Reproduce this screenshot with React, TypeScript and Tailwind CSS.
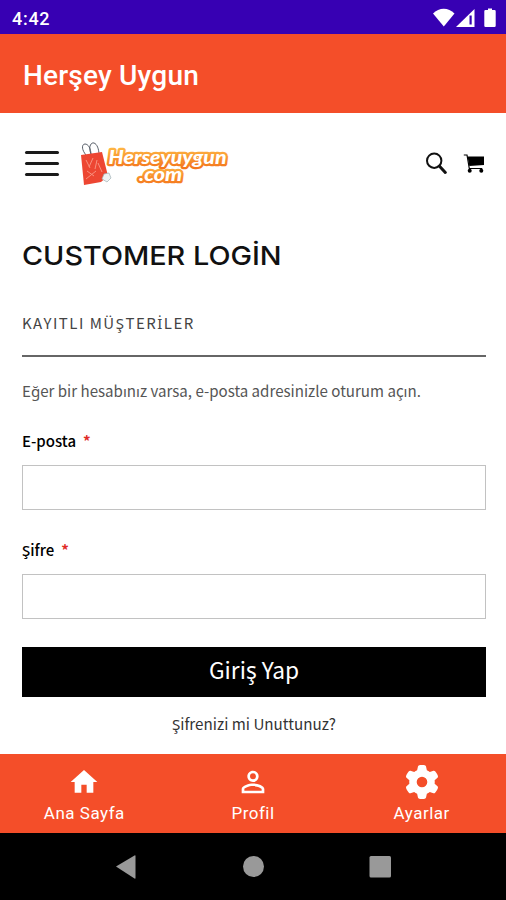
import React from 'react';
import { FaGear } from 'react-icons/fa6';
import { MdPersonOutline } from 'react-icons/md';

function StatusBar() {
  return (
    <div className="h-[34px] shrink-0 bg-[#3700b3] text-white flex items-center justify-between pl-3 pr-2">
      <span className="text-[18px] font-medium leading-none pt-1 tracking-[0.7px]">4:42</span>
      <svg width="66" height="34" viewBox="0 0 66 34" fill="#fff">
        <path d="M1 13.500C7 7 16.500 7 22.500 13.500L11.800 26.500Z" />
        <path d="M24 27L42.500 9V27Z" />
        <path d="M37.500 15.500h2.200v9h-2.200z" fill="#3700b3" />
        <path d="M56 8.500h4v1.500h2.500a1.200 1.200 0 0 1 1.200 1.200v14.600a1.200 1.200 0 0 1-1.200 1.200h-9a1.200 1.200 0 0 1-1.200-1.200V11.200a1.200 1.200 0 0 1 1.200-1.200H56z" />
      </svg>
    </div>
  );
}

function Logo() {
  return (
    <svg width="154" height="50" viewBox="0 0 154 50" className="ml-[19px]">
      <defs>
        <linearGradient id="glow" x1="0" y1="0" x2="0" y2="1">
          <stop offset="0" stopColor="#ffc04a" />
          <stop offset="1" stopColor="#f4761c" />
        </linearGradient>
      </defs>
      <g fill="none" stroke="#59606a" strokeWidth="1">
        <path d="M8 17C3 11 4 6 7 6s6 4 6 11" />
        <path d="M13 16C10 9 13 4 16 5s5 6 5 12" />
      </g>
      <path d="M3 17l21-3 6 24-7 6-17 3z" fill="#ed4632" />
      <path d="M8 22l4 8m3-10l-4 9m8-7l-2 9m-8 2l7 5m-8 3l10-8m2-8l4 9" stroke="#f8917f" strokeWidth="1" fill="none" />
      <path d="M26 36l5-1 2 5-4 4-5-3z" fill="#eef1f2" stroke="#9fb0b4" strokeWidth=".7" />
      <g
        fontFamily="Lato, sans-serif"
        fontWeight="900"
        fontStyle="italic"
        fill="#fff"
        stroke="url(#glow)"
        strokeWidth="4.500"
        strokeLinejoin="round"
        paintOrder="stroke"
      >
        <text x="30.500" y="26" fontSize="19.500" textLength="118" lengthAdjust="spacingAndGlyphs">Herseyuygun</text>
        <text x="61" y="43" fontSize="19" textLength="43" lengthAdjust="spacingAndGlyphs">.com</text>
      </g>
    </svg>
  );
}

function SiteHeader() {
  return (
    <div className="flex items-center h-[50px] mt-[25px] pl-[25px] pr-[21px]">
      <div className="w-[34px] flex flex-col gap-2">
        <div className="h-[3px] rounded-full bg-[#1a1a1a]" />
        <div className="h-[3px] rounded-full bg-[#1a1a1a]" />
        <div className="h-[3px] rounded-full bg-[#1a1a1a]" />
      </div>
      <Logo />
      <div className="ml-auto flex items-center gap-4">
        <svg width="22" height="24" viewBox="0 0 22 24" fill="none" stroke="#111">
          <circle cx="9.200" cy="9.700" r="7.200" strokeWidth="2" />
          <path d="M14.300 15l6 6.500" strokeWidth="3" strokeLinecap="round" />
        </svg>
        <svg width="22" height="22" viewBox="0 0 22 22" fill="#000">
          <path d="M4.500 4.500h16.500v8.500L6.300 14z" />
          <path d="M.8 3h3.200L6.300 16.500h13" fill="none" stroke="#000" strokeWidth="1.200" />
          <circle cx="6.700" cy="18.800" r="2" />
          <circle cx="18.300" cy="18.800" r="2" />
        </svg>
      </div>
    </div>
  );
}

interface FieldProps {
  id: string;
  label: string;
  type: string;
}

function Field({ id, label, type }: FieldProps) {
  return (
    <div>
      <label htmlFor={id} className="block text-[15px] leading-6 font-medium text-black">
        {label}
        <span className="text-[#e02b27] font-bold ml-[7px]">*</span>
      </label>
      <input id={id} type={type} className="block w-full h-[45px] mt-3 px-3 border border-[#c2c2c2] bg-white outline-none" />
    </div>
  );
}

function LoginForm() {
  return (
    <main className="pl-[22px] pr-5 font-['Noto_Sans_CJK_SC','Noto_Sans',sans-serif]">
      <h1 className="mt-[50px] h-9 leading-9 text-[26px] font-medium text-[#111] whitespace-nowrap font-['Inter',sans-serif] origin-left scale-x-[1.107]">
        CUSTOMER LOGİN
      </h1>
      <h2 className="mt-[37px] h-6 leading-6 text-[15px] tracking-[1.5px] text-[#444] whitespace-nowrap">
        KAYITLI MÜŞTER<span className="font-['Noto_Sans',sans-serif]">İ</span>LER
      </h2>
      <div className="mt-5 border-b-2 border-[#666]" />
      <p className="mt-[21px] h-6 leading-6 text-[15.1px] text-[#555] whitespace-nowrap">
        Eğer bir hesabınız varsa, e-posta adresinizle oturum açın.
      </p>
      <form className="mt-[27px] flex flex-col gap-7" onSubmit={(e) => e.preventDefault()}>
        <Field id="email" label="E-posta" type="email" />
        <Field id="password" label="Şifre" type="password" />
        <button type="submit" className="h-[50px] pb-1 bg-black text-white text-[22.7px] leading-none">
          Giriş Yap
        </button>
      </form>
      <a href="#" className="block mt-3.5 text-center text-[15.2px] leading-6 text-[#333]">
        Şifrenizi mi Unuttunuz?
      </a>
    </main>
  );
}

function TabBar() {
  return (
    <nav className="h-[79px] shrink-0 bg-[#f44e29] text-white flex text-[17px] tracking-[0.5px]">
      <a href="#" className="flex-1 flex flex-col items-center pt-3">
        <svg width="32" height="32" viewBox="0 0 24 24" fill="currentColor">
          <path d="M10 20v-6h4v6h5v-8h3L12 3 2 12h3v8z" />
        </svg>
        <span className="leading-5 mt-[5px]">Ana Sayfa</span>
      </a>
      <a href="#" className="flex-1 flex flex-col items-center pt-3">
        <MdPersonOutline size={34} className="-my-px" />
        <span className="leading-5 mt-[5px]">Profil</span>
      </a>
      <a href="#" className="flex-1 flex flex-col items-center pt-3">
        <FaGear size={34} className="-my-px" />
        <span className="leading-5 mt-[5px]">Ayarlar</span>
      </a>
    </nav>
  );
}

function SystemNav() {
  return (
    <div className="h-[67px] shrink-0 bg-black">
      <svg width="506" height="67" viewBox="0 0 506 67" fill="#999">
        <path d="M116 33.500L134.500 22.500q1-.500 1 .500v22q0 1-1 .500z" />
        <circle cx="253.500" cy="33.500" r="10.500" />
        <rect x="369.500" y="23" width="21.500" height="21.500" rx="1.500" />
      </svg>
    </div>
  );
}

export default function App() {
  return (
    <div className="w-[506px] h-[900px] flex flex-col overflow-hidden bg-white font-['Roboto',sans-serif]">
      <StatusBar />
      <header className="h-[79px] shrink-0 bg-[#f44e29] text-white flex items-center pl-[23px]">
        <span className="text-[28px] font-medium leading-none pt-1 tracking-[0.2px]">Herşey Uygun</span>
      </header>
      <div className="flex-1 min-h-0">
        <SiteHeader />
        <LoginForm />
      </div>
      <TabBar />
      <SystemNav />
    </div>
  );
}
